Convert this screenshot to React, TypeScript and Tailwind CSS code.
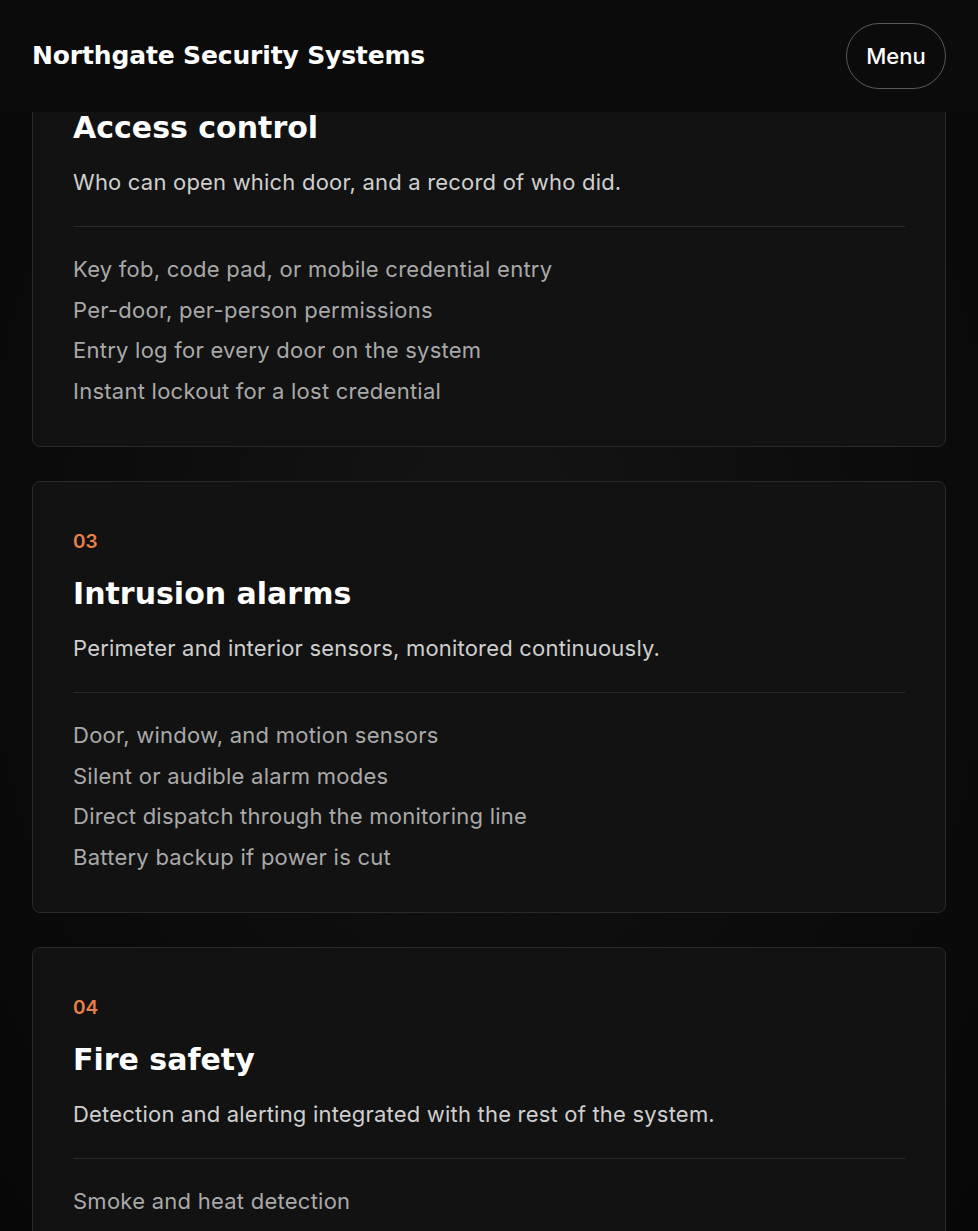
import React from "react";

type Service = {
  num: string;
  title: string;
  desc: string;
  items: string[];
};

const services: Service[] = [
  {
    num: "02",
    title: "Access control",
    desc: "Who can open which door, and a record of who did.",
    items: [
      "Key fob, code pad, or mobile credential entry",
      "Per-door, per-person permissions",
      "Entry log for every door on the system",
      "Instant lockout for a lost credential",
    ],
  },
  {
    num: "03",
    title: "Intrusion alarms",
    desc: "Perimeter and interior sensors, monitored continuously.",
    items: [
      "Door, window, and motion sensors",
      "Silent or audible alarm modes",
      "Direct dispatch through the monitoring line",
      "Battery backup if power is cut",
    ],
  },
  {
    num: "04",
    title: "Fire safety",
    desc: "Detection and alerting integrated with the rest of the system.",
    items: [
      "Smoke and heat detection",
      "Sprinkler and suppression monitoring",
      "Automatic alerting to the fire service",
      "Annual inspection and certification",
    ],
  },
];

const display = "font-['DejaVu_Sans',sans-serif]";
const body = "font-['Inter','Liberation_Sans',sans-serif]";

function Card({ s }: { s: Service }) {
  return (
    <article className="h-[432px] shrink-0 rounded-lg border border-[#2a2a2a] bg-[#121212] px-10 pt-[48px]">
      <div className={`${body} text-[19px] font-semibold leading-[24px] text-[#e8804a]`}>
        {s.num}
      </div>
      <h2
        className={`${display} mt-[22px] text-[30px] font-bold leading-[36px] text-white`}
      >
        {s.title}
      </h2>
      <p
        className={`${body} mt-[20px] text-[22px] leading-[32px] tracking-[0.2px] text-[#cfcfcf]`}
      >
        {s.desc}
      </p>
      <div className="mt-[28px] h-px bg-[#2a2a2a]" />
      <ul
        className={`${body} mt-[22px] text-[22px] leading-[40.67px] tracking-[0.25px] text-[#a9a9a9]`}
      >
        {s.items.map((it) => (
          <li key={it}>{it}</li>
        ))}
      </ul>
    </article>
  );
}

export default function App() {
  return (
    <div className="relative h-[1231px] w-full overflow-hidden bg-[#0a0a0a]">
      <div className="pointer-events-none absolute inset-0 bg-[radial-gradient(ellipse_at_50%_45%,#151515_0%,#0c0c0c_55%,#070707_100%)]" />
      <main className="relative flex flex-col gap-[34px] px-8 pt-[15px]">
        {services.map((s) => (
          <Card key={s.num} s={s} />
        ))}
      </main>
      <header className="absolute inset-x-0 top-0 z-10 flex h-[112px] items-center justify-between bg-[#0b0b0b] px-8">
        <div className={`${display} text-[25px] font-bold tracking-[-0.15px] text-white`}>
          Northgate Security Systems
        </div>
        <button
          className={`${body} h-[66px] w-[100px] rounded-full border border-[#5a5a5a] text-[22px] font-medium text-white`}
        >
          Menu
        </button>
      </header>
    </div>
  );
}
